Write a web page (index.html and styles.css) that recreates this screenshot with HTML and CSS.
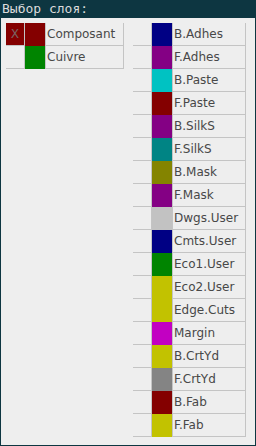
FILE: index.html
```html
<!DOCTYPE html>
<html lang="ru">
<head>
  <meta charset="UTF-8" />
  <title>Выбор слоя</title>
  <link rel="stylesheet" href="styles.css">
</head>
<body>

  <!-- Titre -->
  <div class="title-bar">Выбор слоя:</div>

  <div class="panel">
    <!-- Couches cuivre -->
    <div class="layer-table copper">
      <div class="row">
        <div class="mark sel">X</div>
        <div class="swatch" style="background:#840000"></div>
        <div class="name">Composant</div>
      </div>
      <div class="row">
        <div class="mark"></div>
        <div class="swatch" style="background:#008400"></div>
        <div class="name">Cuivre</div>
      </div>
    </div>

    <!-- Couches techniques -->
    <div class="layer-table tech">
      <div class="row"><div class="mark"></div><div class="swatch" style="background:#000084"></div><div class="name">B.Adhes</div></div>
      <div class="row"><div class="mark"></div><div class="swatch" style="background:#840084"></div><div class="name">F.Adhes</div></div>
      <div class="row"><div class="mark"></div><div class="swatch" style="background:#00c2c2"></div><div class="name">B.Paste</div></div>
      <div class="row"><div class="mark"></div><div class="swatch" style="background:#840000"></div><div class="name">F.Paste</div></div>
      <div class="row"><div class="mark"></div><div class="swatch" style="background:#840084"></div><div class="name">B.SilkS</div></div>
      <div class="row"><div class="mark"></div><div class="swatch" style="background:#008484"></div><div class="name">F.SilkS</div></div>
      <div class="row"><div class="mark"></div><div class="swatch" style="background:#848400"></div><div class="name">B.Mask</div></div>
      <div class="row"><div class="mark"></div><div class="swatch" style="background:#840084"></div><div class="name">F.Mask</div></div>
      <div class="row"><div class="mark"></div><div class="swatch" style="background:#c2c2c2"></div><div class="name">Dwgs.User</div></div>
      <div class="row"><div class="mark"></div><div class="swatch" style="background:#000084"></div><div class="name">Cmts.User</div></div>
      <div class="row"><div class="mark"></div><div class="swatch" style="background:#008400"></div><div class="name">Eco1.User</div></div>
      <div class="row"><div class="mark"></div><div class="swatch" style="background:#c2c200"></div><div class="name">Eco2.User</div></div>
      <div class="row"><div class="mark"></div><div class="swatch" style="background:#c2c200"></div><div class="name">Edge.Cuts</div></div>
      <div class="row"><div class="mark"></div><div class="swatch" style="background:#c200c2"></div><div class="name">Margin</div></div>
      <div class="row"><div class="mark"></div><div class="swatch" style="background:#c2c200"></div><div class="name">B.CrtYd</div></div>
      <div class="row"><div class="mark"></div><div class="swatch" style="background:#848484"></div><div class="name">F.CrtYd</div></div>
      <div class="row"><div class="mark"></div><div class="swatch" style="background:#840000"></div><div class="name">B.Fab</div></div>
      <div class="row"><div class="mark"></div><div class="swatch" style="background:#c2c200"></div><div class="name">F.Fab</div></div>
    </div>
  </div>

</body>
</html>
```

FILE: styles.css
```css
html, body {
  margin: 0;
  padding: 0;
}

body {
  width: 256px;
  height: 446px;
  background-color: #0d3641; /* fond sombre de la fenêtre */
  font-family: "DejaVu Sans", sans-serif;
  font-size: 12px;
  color: #484848;
  display: flex;
  flex-direction: column;
  overflow: hidden;
}

/* Titre */
.title-bar {
  height: 18px;
  line-height: 17px;
  padding-left: 2px;
  font-family: "DejaVu Sans Mono", monospace;
  font-size: 13px;
  color: #dcdcdc;
}

/* Panneau */
.panel {
  flex: 1;
  margin: 0 1px 1px 1px;
  background-color: #eeeeee;
  padding: 5px 0 0 5px;
  display: flex;
  align-items: flex-start;
  gap: 9px;
}

.layer-table {
  display: flex;
  flex-direction: column;
}

.copper {
  width: 118px;
}

.tech {
  width: 113px;
}

.row {
  display: flex;
  height: 22px;
  border-bottom: 1px solid #c4c4c4;
}

.mark {
  width: 18px;
  border-right: 1px solid #c4c4c4;
  text-align: center;
  line-height: 22px;
  font-family: "DejaVu Sans Mono", monospace;
  font-size: 13px;
  color: #8a8a8a;
}

.mark.sel {
  background-color: #840000;
  color: #7a6262;
}

.swatch {
  width: 20px;
  margin-bottom: -1px;
}

.name {
  flex: 1;
  border-left: 1px solid #c4c4c4;
  border-right: 1px solid #c4c4c4;
  padding-left: 1px;
  line-height: 22px;
  white-space: nowrap;
}
```
